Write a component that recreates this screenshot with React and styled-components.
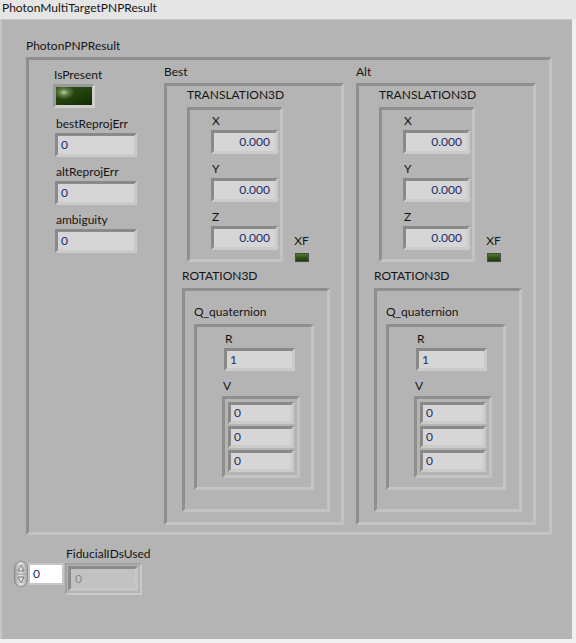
import styled, { createGlobalStyle } from 'styled-components'

const GlobalStyle = createGlobalStyle`
  * { box-sizing: border-box; }
  body {
    margin: 0;
    background: #f0f0f0;
    font-family: Lato, "Liberation Sans", sans-serif;
  }
`

const Window = styled.div`
  width: 576px;
  height: 643px;
  overflow: hidden;
`

const TitleBar = styled.div`
  height: 19px;
  padding-left: 2px;
  font-size: 12px;
  line-height: 16px;
  color: #141414;
  background: #e5e5e5;
`

const Panel = styled.div`
  width: 572px;
  height: 620px;
  background: #b4b4b4;
  border-top: 1px solid #c9c9c9;
  border-left: 2px solid #c6c6c6;
  padding-top: 18px;
  display: flex;
  flex-direction: column;
`

const Label = styled.div`
  font-size: 12px;
  line-height: 16px;
  height: 16px;
  color: #141414;
  white-space: nowrap;
  margin-bottom: ${p => p.$gap ?? 1}px;
  margin-left: ${p => p.$indent ?? 0}px;
`

const Frame = styled.div`
  width: ${p => p.$w}px;
  height: ${p => p.$h}px;
  padding: ${p => p.$pad || '0'};
  border: 3px solid;
  border-color: #8f8f8f #c3c3c3 #c3c3c3 #8f8f8f;
  display: flex;
  flex-direction: column;
  align-items: flex-start;
`

const ClusterBlock = styled.div`
  margin-left: 24px;
`

const ClusterBody = styled(Frame)`
  flex-direction: row;
`

const LeftColumn = styled.div`
  width: 111px;
  margin-top: 3px;
  display: flex;
  flex-direction: column;
`

const Control = styled.div`
  margin-top: ${p => p.$top ?? 0}px;
  margin-left: ${p => p.$left ?? 0}px;
  display: flex;
  flex-direction: column;
  align-items: flex-start;
`

const Indicator = styled.div`
  width: ${p => p.$w}px;
  height: ${p => p.$h ?? 24}px;
  margin-left: ${p => p.$left ?? 0}px;
  border: 3px solid;
  border-color: #898989 #cbcbcb #cbcbcb #898989;
  background: #d6d6d6;
  color: #1b2a6e;
  font-size: 12px;
  line-height: ${p => (p.$h ?? 24) - 6}px;
  padding: 0 ${p => (p.$align === 'right' ? 5 : 3)}px;
  text-align: ${p => p.$align || 'left'};
`

const BigLed = styled.div`
  width: 42px;
  height: 24px;
  border: 3px solid;
  border-color: #9a9a9a #cfcfcf #cfcfcf #9a9a9a;
  background: radial-gradient(ellipse 30% 40% at 22% 30%, #b9c9a4 0%, #5d7c40 45%, transparent 100%),
    linear-gradient(160deg, #2f5314 0%, #1f3d0b 60%, #132804 100%);
`

const SmallLed = styled.div`
  width: 14px;
  height: 9px;
  margin-left: 2px;
  border: 1px solid #4a4a4a;
  background: linear-gradient(180deg, #4f7a2e 0%, #2a5212 60%, #1d3d0a 100%);
`

const PoseRow = styled.div`
  display: flex;
  gap: 12px;
`

const TranslationRow = styled.div`
  display: flex;
  align-items: flex-end;
  margin-left: 5px;
`

const Flag = styled.div`
  margin-left: 9px;
  display: flex;
  flex-direction: column;
`

const Section = styled.div`
  margin-top: ${p => p.$top ?? 0}px;
`

const ArrayBox = styled(Frame)`
  padding: 3px;
  gap: 2px;
`

const BottomRow = styled.div`
  margin-top: 11px;
  padding-left: 12px;
  display: flex;
  align-items: flex-start;
`

const IndexControl = styled.div`
  margin-top: 15px;
  display: flex;
  align-items: center;
`

const NumInput = styled.div`
  width: 36px;
  height: 22px;
  border: 2px solid #c5c5c5;
  background: #ffffff;
  color: #1b2a6e;
  font-size: 12px;
  line-height: 18px;
  padding-left: 3px;
`

const ElementFrame = styled.div`
  width: 77px;
  height: 32px;
  border: 2px solid;
  border-color: #a3a3a3 #cacaca #cacaca #a3a3a3;
  padding: 1px;
`

const DisabledValue = styled.div`
  width: 70px;
  height: 25px;
  border: 3px solid;
  border-color: #8b8b8b #c7c7c7 #c7c7c7 #8b8b8b;
  background: #c2c2c2;
  color: #8a8a8a;
  font-size: 12px;
  line-height: 19px;
  padding-left: 4px;
`

const Spinner = () => (
  <svg width="14" height="26" viewBox="0 0 14 26">
    <defs>
      <linearGradient id="spin" x1="0" y1="0" x2="1" y2="0">
        <stop offset="0" stopColor="#9a9a9a" />
        <stop offset="0.45" stopColor="#e8e8e8" />
        <stop offset="1" stopColor="#a4a4a4" />
      </linearGradient>
    </defs>
    <rect x="0.5" y="0.5" width="13" height="25" rx="6.5" fill="url(#spin)" stroke="#8c8c8c" />
    <line x1="2" y1="13" x2="12" y2="13" stroke="#9c9c9c" />
    <path d="M7 4 L10 10 L4 10 Z" fill="none" stroke="#7d7d7d" />
    <path d="M7 22 L10 16 L4 16 Z" fill="none" stroke="#7d7d7d" />
  </svg>
)

const Field = ({ label, value, w, h, align, top, left = 0, labelIndent = 1, gap = 1 }) => (
  <Control $top={top} $left={left}>
    <Label $indent={labelIndent} $gap={gap}>{label}</Label>
    <Indicator $w={w} $h={h} $align={align}>{value}</Indicator>
  </Control>
)

const Pose = ({ title }) => (
  <div>
    <Label $gap={3}>{title}</Label>
    <Frame $w={180} $h={442} $pad="1px 0 0 15px">
      <TranslationRow>
        <div>
          <Label $gap={4}>TRANSLATION3D</Label>
          <Frame $w={96} $h={155} $pad="3px 0 0 21px">
            {['X', 'Y', 'Z'].map((axis, i) => (
              <Field key={axis} label={axis} value="0.000" w={67} align="right" top={i ? 7 : 0} />
            ))}
          </Frame>
        </div>
        <Flag>
          <Label $indent={1} $gap={4}>XF</Label>
          <SmallLed />
        </Flag>
      </TranslationRow>
      <Section $top={6}>
        <Label $gap={4}>ROTATION3D</Label>
        <Frame $w={148} $h={224} $pad="13px 0 0 9px">
          <Label $gap={4}>Q_quaternion</Label>
          <Frame $w={120} $h={166} $pad="4px 0 0 25px">
            <Field label="R" value="1" w={71} h={23} left={2} labelIndent={1} />
            <Control $top={7}>
              <Label $indent={1} $gap={2}>V</Label>
              <ArrayBox $w={78} $h={82}>
                {[0, 0, 0].map((v, i) => (
                  <Indicator key={i} $w={66} $h={22}>{v}</Indicator>
                ))}
              </ArrayBox>
            </Control>
          </Frame>
        </Frame>
      </Section>
    </Frame>
  </div>
)

const App = () => {
  const errors = ['bestReprojErr', 'altReprojErr', 'ambiguity']
  return (
    <Window>
      <GlobalStyle />
      <TitleBar>PhotonMultiTargetPNPResult</TitleBar>
      <Panel>
        <ClusterBlock>
          <Label $gap={3}>PhotonPNPResult</Label>
          <ClusterBody $w={526} $h={478} $pad="4px 0 0 24px">
            <LeftColumn>
              <Label $indent={1} $gap={1}>IsPresent</Label>
              <BigLed />
              {errors.map((name, i) => (
                <Field key={name} label={name} value="0" w={82} left={2} top={i ? 7 : 8} />
              ))}
            </LeftColumn>
            <PoseRow>
              <Pose title="Best" />
              <Pose title="Alt" />
            </PoseRow>
          </ClusterBody>
        </ClusterBlock>
        <BottomRow>
          <IndexControl>
            <Spinner />
            <NumInput>0</NumInput>
          </IndexControl>
          <Control $left={1}>
            <Label $indent={1} $gap={1}>FiducialIDsUsed</Label>
            <ElementFrame>
              <DisabledValue>0</DisabledValue>
            </ElementFrame>
          </Control>
        </BottomRow>
      </Panel>
    </Window>
  )
}

export default App
